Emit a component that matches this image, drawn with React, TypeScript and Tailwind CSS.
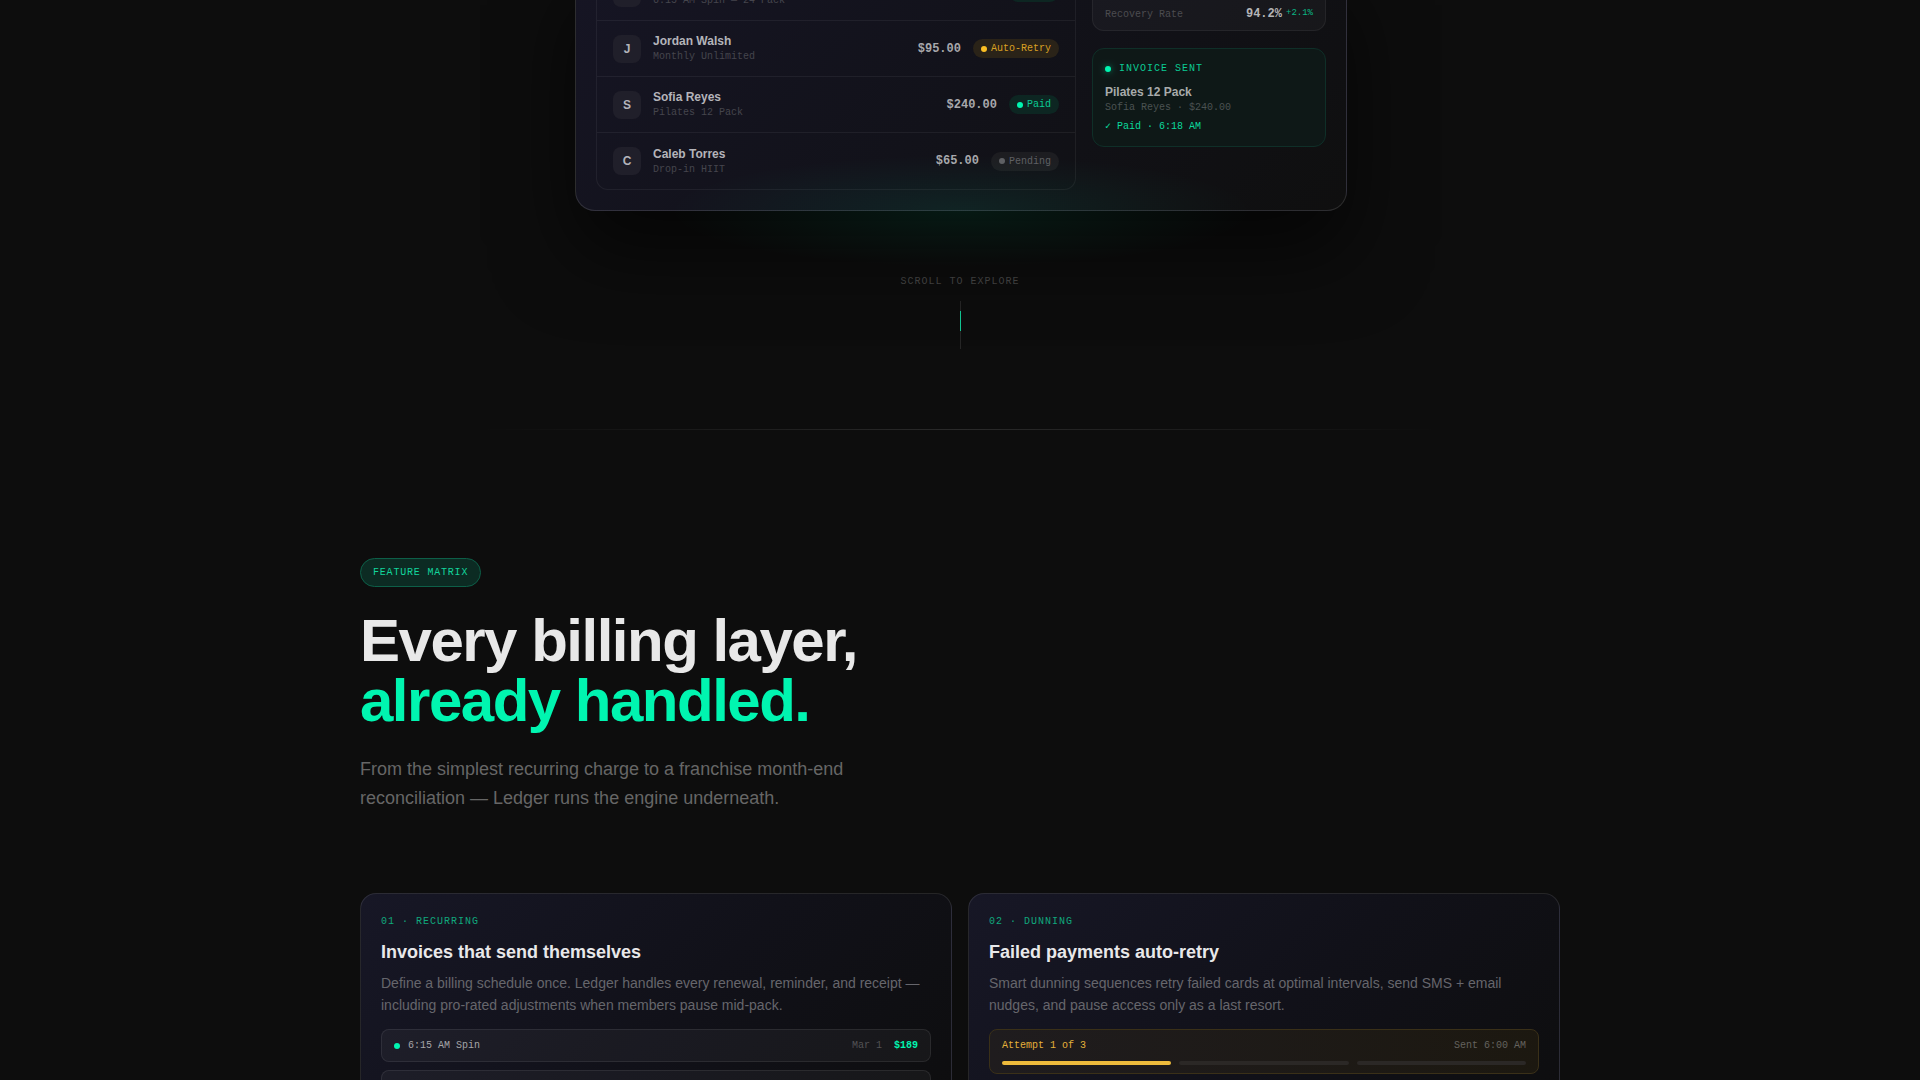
import React from 'react';

type Status = 'paid' | 'retry' | 'pending';

interface Member {
  name: string;
  plan: string;
  amount: string;
  status: Status;
}

const members: Member[] = [
  { name: 'Maya Chen', plan: '6:15 AM Spin — 24 Pack', amount: '$189.00', status: 'paid' },
  { name: 'Jordan Walsh', plan: 'Monthly Unlimited', amount: '$95.00', status: 'retry' },
  { name: 'Sofia Reyes', plan: 'Pilates 12 Pack', amount: '$240.00', status: 'paid' },
  { name: 'Caleb Torres', plan: 'Drop-in HIIT', amount: '$65.00', status: 'pending' },
];

const mono = "font-['Liberation_Mono',monospace]";

const badges: Record<Status, { label: string; pill: string; dot: string }> = {
  paid: { label: 'Paid', pill: 'bg-[#0d2622] text-[#0bcb94]', dot: 'bg-[#00f5b0]' },
  retry: { label: 'Auto-Retry', pill: 'bg-[#2a2318] text-[#d9a022]', dot: 'bg-[#fbbf24]' },
  pending: { label: 'Pending', pill: 'bg-[#1d1d21] text-[#5f5f63]', dot: 'bg-[#5f5f63]' },
};

const StatusBadge: React.FC<{ status: Status }> = ({ status }) => {
  const { label, pill, dot } = badges[status];
  return (
    <span className={`flex items-center gap-1 rounded-full px-2 py-[2px] text-[10px] leading-[15px] ${mono} ${pill}`}>
      <span className={`h-1.5 w-1.5 rounded-full ${dot}`} />
      {label}
    </span>
  );
};

const MemberRow: React.FC<{ member: Member }> = ({ member }) => (
  <li className="flex h-14 items-center gap-3 border-b border-white/6 px-4 last:border-b-0">
    <span className="flex h-7 w-7 items-center justify-center rounded-lg bg-[#201f2a] text-xs font-bold text-[#b4b4ba]">
      {member.name[0]}
    </span>
    <div className="flex-1">
      <p className="text-xs leading-4 font-bold text-[#b4b4ba]">{member.name}</p>
      <p className={`text-[10px] leading-[15px] text-[#45454d] ${mono}`}>{member.plan}</p>
    </div>
    <span className={`text-xs font-bold text-[#a8a8ac] ${mono}`}>{member.amount}</span>
    <StatusBadge status={member.status} />
  </li>
);

const Dashboard: React.FC = () => (
  <div className="relative mx-auto w-full max-w-[772px]">
    <div className="flex gap-4 rounded-b-[20px] border border-t-0 border-white/12 bg-linear-135 from-[#161524] via-[#12121a] to-[#0f0f0f] px-5 pb-5 shadow-[0_40px_80px_rgba(0,0,0,0.6)]">
      <ul className="flex-1 rounded-b-xl border border-t-0 border-white/6">
        {members.map((member) => (
          <MemberRow key={member.name} member={member} />
        ))}
      </ul>

      <div className="flex w-[234px] flex-col gap-[17px]">
        <div className="flex h-[66px] flex-col justify-end rounded-b-xl border border-t-0 border-white/6 bg-white/3 px-3 pb-2">
          <div className={`flex items-center ${mono}`}>
            <span className="flex-1 text-[10px] leading-[15px] text-[#4c4c50]">Recovery Rate</span>
            <span className="text-xs font-bold text-[#b4b4b6]">94.2%</span>
            <span className="ml-1 text-[9px] text-[#0bb584]">+2.1%</span>
          </div>
        </div>

        <div className="rounded-xl border border-[#0f2f28] bg-[#0e1817] p-3">
          <div className="flex items-center gap-2">
            <span className="h-1.5 w-1.5 rounded-full bg-[#00f5b0] shadow-[0_0_6px_#00f5b0]/50" />
            <span className={`text-[10px] leading-[15px] tracking-[1px] text-[#0bcb94] ${mono}`}>INVOICE SENT</span>
          </div>
          <p className="mt-2 text-xs leading-4 font-bold text-[#a8abab]">Pilates 12 Pack</p>
          <p className={`text-[10px] leading-[15px] text-[#4b5252] ${mono}`}>Sofia Reyes · $240.00</p>
          <p className={`mt-1 text-[10px] leading-[15px] text-[#0bd99d] ${mono}`}>✓ Paid · 6:18 AM</p>
        </div>
      </div>
    </div>

    {/* Glow under the panel */}
    <div className="pointer-events-none absolute inset-x-[12%] -bottom-14 h-28 bg-radial-[closest-side] from-[#00f5b0]/8 via-[#00f5b0]/4 to-transparent" />
  </div>
);

const FeatureCard: React.FC<{ tag: string; title: string; text: string; children: React.ReactNode }> = ({
  tag,
  title,
  text,
  children,
}) => (
  <article className="rounded-2xl border border-white/10 bg-linear-135 from-[#171726] via-[#111119] via-50% to-[#0d0d0d] p-5">
    <p className={`text-[10px] leading-[15px] tracking-[1px] text-[#10a87d] ${mono}`}>{tag}</p>
    <h3 className="mt-[11px] text-lg leading-6 font-bold text-[#e8e8ea]">{title}</h3>
    <p className="mt-2 text-sm leading-[22px] text-[#66666c]">{text}</p>
    <div className="mt-[13px] flex flex-col gap-2">{children}</div>
  </article>
);

const App: React.FC = () => {
  return (
    <div className="h-screen overflow-hidden bg-[#0d0d0d] font-['Liberation_Sans',Arial,sans-serif]">
      <section className="-mt-[35px]">
        <div className="pl-0.5">
          <Dashboard />
        </div>

        <div className="mt-[63px] flex flex-col items-center gap-3">
          <p className={`text-[10px] leading-[15px] tracking-[1px] text-[#484848] ${mono}`}>SCROLL TO EXPLORE</p>
          <div className="h-12 w-px bg-[#262626] pt-2.5">
            <div className="h-5 bg-[#12c894]" />
          </div>
        </div>
      </section>

      <div className="mx-auto mt-20 h-px w-full max-w-[960px] bg-linear-to-r from-transparent via-white/12 to-transparent" />

      <section className="mx-auto mt-32 w-full max-w-[1200px]">
        <span
          className={`inline-block rounded-full border border-[#0d5f48] bg-[#0c2b23] px-3 py-1.5 align-top text-[10px] leading-[15px] tracking-[0.08em] text-[#12d69d] ${mono}`}
        >
          FEATURE MATRIX
        </span>
        <h2 className="mt-6 text-6xl leading-[60px] font-bold tracking-tight text-[#e8e8e8]">
          Every billing layer,
          <br />
          <span className="text-[#00f5b0]">already handled.</span>
        </h2>
        <p className="mt-6 max-w-[520px] text-lg leading-[29px] text-[#666666]">
          From the simplest recurring charge to a franchise month-end reconciliation — Ledger runs the engine
          underneath.
        </p>

        <div className="mt-20 grid grid-cols-2 gap-4">
          <FeatureCard
            tag="01 · RECURRING"
            title="Invoices that send themselves"
            text="Define a billing schedule once. Ledger handles every renewal, reminder, and receipt — including pro-rated adjustments when members pause mid-pack."
          >
            <div className={`flex items-center rounded-lg border border-white/8 bg-white/4 px-3 py-2 text-[10px] leading-[15px] ${mono}`}>
              <span className="mr-2 h-1.5 w-1.5 rounded-full bg-[#00f5b0]" />
              <span className="flex-1 text-[#a5a5a8]">6:15 AM Spin</span>
              <span className="mr-3 text-[#525254]">Mar 1</span>
              <span className="font-bold text-[#00f5b0]">$189</span>
            </div>
            <div className="h-[33px] rounded-lg border border-white/8 bg-white/4" />
            <div className="h-[33px] rounded-lg border border-white/8 bg-white/4" />
          </FeatureCard>

          <FeatureCard
            tag="02 · DUNNING"
            title="Failed payments auto-retry"
            text="Smart dunning sequences retry failed cards at optimal intervals, send SMS + email nudges, and pause access only as a last resort."
          >
            <div className="rounded-lg border border-[#3a3018] bg-linear-to-r from-[#1f1c1e] to-[#1c1810] px-3 py-2">
              <div className={`flex justify-between text-[10px] leading-[15px] ${mono}`}>
                <span className="text-[#e5b13a]">Attempt 1 of 3</span>
                <span className="text-[#64625e]">Sent 6:00 AM</span>
              </div>
              <div className="mt-2 grid grid-cols-3 gap-2">
                <span className="h-1 rounded-full bg-[#eebb3c]" />
                <span className="h-1 rounded-full bg-[#2b2826]" />
                <span className="h-1 rounded-full bg-[#2b2826]" />
              </div>
            </div>
          </FeatureCard>
        </div>
      </section>
    </div>
  );
};

export default App;
